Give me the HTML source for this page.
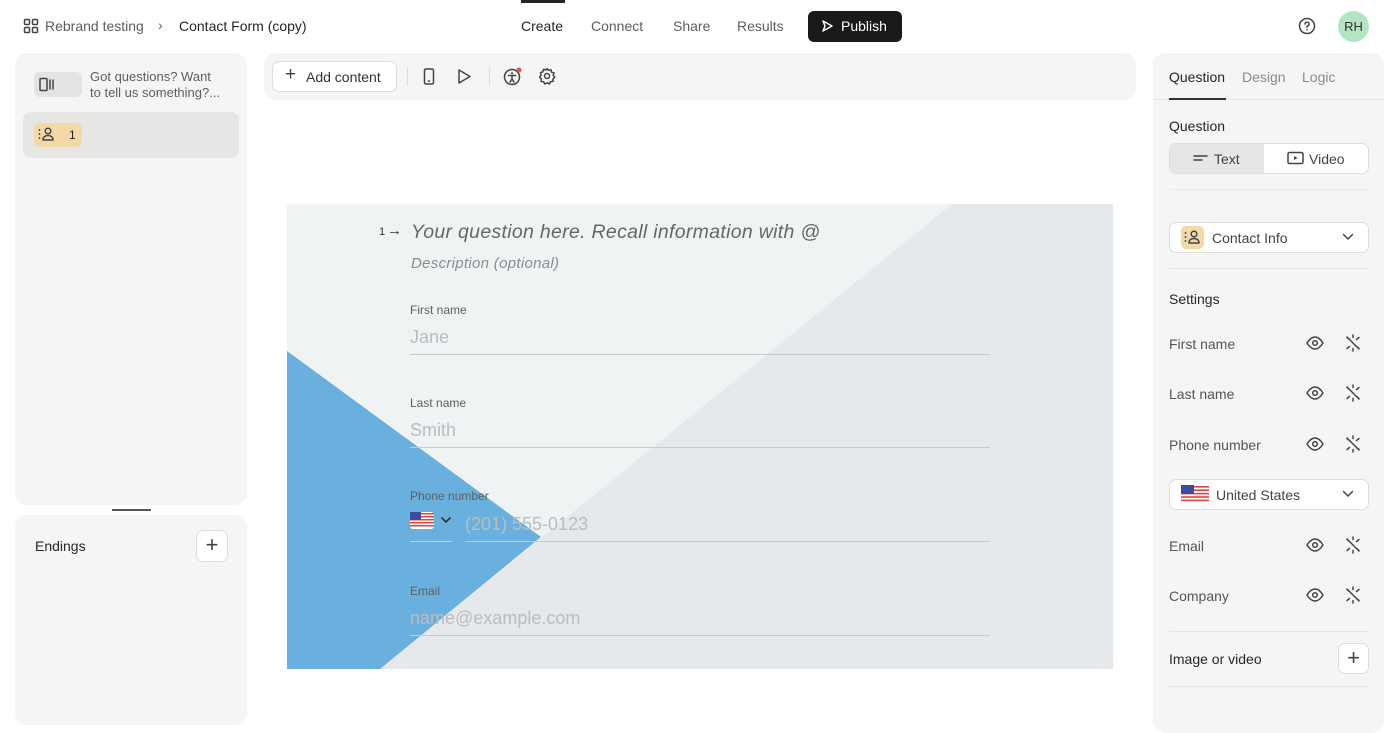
<!DOCTYPE html>
<html><head><meta charset="utf-8"><style>
*{box-sizing:border-box;margin:0;padding:0}
body{width:1400px;height:712px;overflow:hidden;background:#fff;font-family:"Liberation Sans",sans-serif;color:#262626;position:relative}
.a{position:absolute}
.panel{background:#f5f5f4;border-radius:12px}
.t{font-size:14px;white-space:nowrap}
.lbl{font-size:12px;color:#5e5e5e}
.ph{font-size:18px;color:#b9bdbf}
.line{height:1px;background:#c9cccd}
.ico{stroke:#444;fill:none;stroke-width:1.5;stroke-linecap:round;stroke-linejoin:round}
</style></head><body>

<svg class="a" style="left:23px;top:18px" width="16" height="16" viewBox="0 0 16 16"><g class="ico" stroke-width="1.3"><rect x="1.5" y="1.5" width="5" height="5" rx="1"/><rect x="9.5" y="1.5" width="5" height="5" rx="1"/><rect x="1.5" y="9.5" width="5" height="5" rx="1"/><rect x="9.5" y="9.5" width="5" height="5" rx="1"/></g></svg>
<div class="a t" style="left:45px;top:18px;color:#5e5e5e">Rebrand testing</div>
<div class="a t" style="left:158px;top:17px;color:#5e5e5e">›</div>
<div class="a t" style="left:179px;top:18px">Contact Form (copy)</div>
<div class="a" style="left:521px;top:0;width:44px;height:3px;background:#262626"></div>
<div class="a t" style="left:521px;top:18px">Create</div>
<div class="a t" style="left:591px;top:18px;color:#5e5e5e">Connect</div>
<div class="a t" style="left:673px;top:18px;color:#5e5e5e">Share</div>
<div class="a t" style="left:737px;top:18px;color:#5e5e5e">Results</div>
<div class="a" style="left:808px;top:11px;width:94px;height:31px;background:#191919;border-radius:6px"></div>
<svg class="a" style="left:820px;top:19px" width="14" height="14" viewBox="0 0 14 14"><path d="M3 2 L12 7 L3 12 L5 7 Z" fill="none" stroke="#fff" stroke-width="1.5" stroke-linejoin="round"/></svg>
<div class="a t" style="left:841px;top:18px;color:#fff">Publish</div>
<svg class="a" style="left:1298px;top:17px" width="18" height="18" viewBox="0 0 18 18"><circle cx="9" cy="9" r="7.5" class="ico"/><path d="M7 7a2 2 0 1 1 2.5 2c-.5.2-.5.6-.5 1.2" class="ico"/><circle cx="9" cy="12.8" r=".8" fill="#444"/></svg>
<div class="a" style="left:1338px;top:11px;width:31px;height:31px;border-radius:50%;background:#b3e5c3;font-size:13px;text-align:center;line-height:31px;color:#333">RH</div>

<div class="a panel" style="left:15px;top:53px;width:232px;height:452px"></div>
<div class="a" style="left:34px;top:72px;width:48px;height:25px;background:#e3e3e2;border-radius:6px"></div>
<svg class="a" style="left:39px;top:77px" width="18" height="15" viewBox="0 0 18 15"><rect x="1" y="1.5" width="7" height="12" rx="1" class="ico"/><path d="M11 3v9M14 3v9" class="ico"/></svg>
<div class="a" style="left:90px;top:69px;font-size:13px;line-height:16px;color:#5e5e5e">Got questions? Want<br>to tell us something?...</div>
<div class="a" style="left:23px;top:112px;width:216px;height:46px;background:#e6e6e5;border-radius:8px"></div>
<div class="a" style="left:34px;top:123px;width:48px;height:24px;background:#f3d9a8;border-radius:6px"></div>
<svg class="a" style="left:37px;top:126px" width="20" height="18" viewBox="0 0 20 18"><circle cx="2.5" cy="4" r=".9" fill="#333"/><circle cx="2.5" cy="8" r=".9" fill="#333"/><circle cx="2.5" cy="12" r=".9" fill="#333"/><circle cx="11" cy="5" r="2.8" class="ico" stroke="#333"/><path d="M6 14c0-3 2.2-4.5 5-4.5s5 1.5 5 4.5Z" class="ico" stroke="#333"/></svg>
<div class="a" style="left:69px;top:128px;font-size:12px">1</div>
<div class="a" style="left:112px;top:509px;width:39px;height:2px;background:#555"></div>
<div class="a panel" style="left:15px;top:515px;width:232px;height:210px"></div>
<div class="a t" style="left:35px;top:538px">Endings</div>
<div class="a" style="left:196px;top:530px;width:32px;height:32px;border:1px solid #ddd;border-radius:7px;background:#fff;text-align:center;line-height:28px;font-size:22px;color:#444;font-weight:300">+</div>

<div class="a panel" style="left:264px;top:53px;width:872px;height:47px"></div>
<div class="a" style="left:272px;top:61px;width:125px;height:31px;background:#fff;border:1px solid #ddd;border-radius:7px"></div>
<div class="a t" style="left:285px;top:68px;font-size:19px;line-height:14px;color:#444;font-weight:300">+</div>
<div class="a t" style="left:306px;top:69px;color:#333">Add content</div>
<div class="a" style="left:407px;top:67px;width:1px;height:19px;background:#ddd"></div>
<svg class="a" style="left:422px;top:68px" width="14" height="17" viewBox="0 0 14 17"><rect x="2.5" y="1" width="9" height="15" rx="1.5" class="ico"/><path d="M6.5 13h1" class="ico"/></svg>
<svg class="a" style="left:456px;top:68px" width="16" height="17" viewBox="0 0 16 17"><path d="M3 2 L14 8.5 L3 15 Z" class="ico"/></svg>
<div class="a" style="left:489px;top:67px;width:1px;height:19px;background:#ddd"></div>
<svg class="a" style="left:503px;top:67px" width="20" height="20" viewBox="0 0 20 20"><circle cx="9" cy="10" r="7.5" class="ico"/><circle cx="9" cy="6.3" r="1" fill="#444"/><path d="M5.5 8.5h7M9 8.5v3.5l-2 3M9 12l2 3" class="ico" stroke-width="1.3"/><circle cx="16" cy="3" r="2.5" fill="#e0584a"/></svg>
<svg class="a" style="left:538px;top:67px" width="18" height="18" viewBox="0 0 18 18"><circle cx="9" cy="9" r="2.5" class="ico"/><path d="M9 1.5l1.6 1.9 2.4-.6.6 2.4 2.4.8-.8 2.4 1.6 1.9-1.9 1.6.2 2.5-2.5.2-1.1 2.3-2.5-1-2.3 1.1-1.1-2.3-2.5-.2.2-2.5L1.6 10 3.2 8 2.5 5.6 4.9 4.8 5.5 2.4 8 3z" class="ico" stroke-width="1.3"/></svg>

<svg class="a" style="left:287px;top:204px" width="826" height="465" viewBox="0 0 826 465">
<rect width="826" height="465" fill="#f0f3f4"/>
<polygon points="665,0 826,0 826,465 93,465" fill="#e6e9eb"/>
<polygon points="0,147 254,333 93,465 0,465" fill="#6ab0de"/>
</svg>
<div class="a" style="left:379px;top:226px;font-size:11px;color:#333">1</div>
<div class="a" style="left:387px;top:222px;font-size:15px;color:#333">→</div>
<div class="a" style="left:411px;top:221px;font-size:19.5px;letter-spacing:0.3px;font-style:italic;color:#666">Your question here. Recall information with @</div>
<div class="a" style="left:411px;top:255px;font-size:15px;letter-spacing:0.3px;font-style:italic;color:#8a8d8f">Description (optional)</div>

<div class="a lbl" style="left:410px;top:303px">First name</div>
<div class="a ph" style="left:410px;top:327px">Jane</div>
<div class="a line" style="left:410px;top:354px;width:580px"></div>
<div class="a lbl" style="left:410px;top:396px">Last name</div>
<div class="a ph" style="left:410px;top:420px">Smith</div>
<div class="a line" style="left:410px;top:447px;width:580px"></div>
<div class="a lbl" style="left:410px;top:489px">Phone number</div>
<svg class="a" style="left:410px;top:512px" width="24" height="17" viewBox="0 0 24 17"><rect width="24" height="17" rx="3" fill="#fff"/><g fill="#d44"><rect y="1" width="24" height="1.5"/><rect y="4" width="24" height="1.5"/><rect y="7" width="24" height="1.5"/><rect y="10" width="24" height="1.5"/><rect y="13" width="24" height="1.5"/></g><rect width="11" height="8" fill="#3a4d9a"/></svg>
<svg class="a" style="left:440px;top:516px" width="12" height="8" viewBox="0 0 12 8"><path d="M1.5 1.5L6 6l4.5-4.5" stroke="#333" stroke-width="1.6" fill="none"/></svg>
<div class="a ph" style="left:465px;top:514px">(201) 555-0123</div>
<div class="a line" style="left:410px;top:541px;width:42px"></div>
<div class="a line" style="left:465px;top:541px;width:525px"></div>
<div class="a lbl" style="left:410px;top:584px">Email</div>
<div class="a ph" style="left:410px;top:608px">name@example.com</div>
<div class="a line" style="left:410px;top:635px;width:580px"></div>

<div class="a panel" style="left:1153px;top:53px;width:231px;height:680px"></div>
<div class="a t" style="left:1169px;top:69px">Question</div>
<div class="a t" style="left:1242px;top:69px;color:#8a8a8a">Design</div>
<div class="a t" style="left:1302px;top:69px;color:#8a8a8a">Logic</div>
<div class="a" style="left:1153px;top:99px;width:231px;height:1px;background:#e3e3e2"></div>
<div class="a" style="left:1169px;top:98px;width:57px;height:2px;background:#333"></div>
<div class="a t" style="left:1169px;top:118px">Question</div>
<div class="a" style="left:1169px;top:143px;width:200px;height:31px;border:1px solid #ddd;border-radius:7px;background:#fff;overflow:hidden"><div style="width:94px;height:100%;background:#e6e6e5"></div></div>
<svg class="a" style="left:1193px;top:153px" width="16" height="10" viewBox="0 0 16 10"><path d="M1 3h13M1 7h8" class="ico"/></svg>
<div class="a t" style="left:1214px;top:151px;color:#444">Text</div>
<svg class="a" style="left:1287px;top:151px" width="17" height="14" viewBox="0 0 17 14"><rect x="1" y="1.5" width="15" height="11" rx="1.5" class="ico"/><path d="M7 5v4l3.5-2z" fill="#444"/></svg>
<div class="a t" style="left:1309px;top:151px;color:#444">Video</div>
<div class="a" style="left:1169px;top:189px;width:200px;height:1px;background:#ebebea"></div>
<div class="a" style="left:1169px;top:222px;width:200px;height:31px;border:1px solid #ddd;border-radius:7px;background:#fff"></div>
<div class="a" style="left:1181px;top:226px;width:23px;height:23px;background:#f3d9a8;border-radius:5px"></div>
<svg class="a" style="left:1183px;top:229px" width="20" height="18" viewBox="0 0 20 18"><circle cx="2.5" cy="4" r=".9" fill="#333"/><circle cx="2.5" cy="8" r=".9" fill="#333"/><circle cx="2.5" cy="12" r=".9" fill="#333"/><circle cx="11" cy="5" r="2.8" class="ico" stroke="#333"/><path d="M6 14c0-3 2.2-4.5 5-4.5s5 1.5 5 4.5Z" class="ico" stroke="#333"/></svg>
<div class="a t" style="left:1212px;top:230px;color:#444">Contact Info</div>
<svg class="a" style="left:1342px;top:233px" width="12" height="8" viewBox="0 0 12 8"><path d="M1.5 1.5L6 6l4.5-4.5" class="ico"/></svg>
<div class="a" style="left:1169px;top:268px;width:200px;height:1px;background:#e3e3e2"></div>
<div class="a t" style="left:1169px;top:291px">Settings</div>

<div class="a t" style="left:1169px;top:336px;color:#555">First name</div>
<div class="a t" style="left:1169px;top:386px;color:#555">Last name</div>
<div class="a t" style="left:1169px;top:437px;color:#555">Phone number</div>
<div class="a t" style="left:1169px;top:538px;color:#555">Email</div>
<div class="a t" style="left:1169px;top:588px;color:#555">Company</div>
<svg class="a" style="left:1304px;top:333px" width="60" height="275" viewBox="0 0 60 275">
<defs><g id="r"><path d="M3 10c2.5-4 5.5-6 8-6s5.5 2 8 6c-2.5 4-5.5 6-8 6s-5.5-2-8-6z" class="ico"/><circle cx="11" cy="10" r="2.3" class="ico"/><path d="M49 2v2.5M49 15.5v2.5M43 4.5l2.5 2M55 4.5l-2.5 2M43 15.5l2.5-2M55 15.5l-2.5-2M43 4l12 12" class="ico" stroke-width="1.4"/></g></defs>
<use href="#r" y="0"/><use href="#r" y="50"/><use href="#r" y="101"/><use href="#r" y="202"/><use href="#r" y="252"/>
</svg>
<div class="a" style="left:1169px;top:479px;width:200px;height:31px;border:1px solid #ddd;border-radius:7px;background:#fff"></div>
<svg class="a" style="left:1181px;top:485px" width="28" height="19" viewBox="0 0 28 19"><rect width="28" height="19" rx="3" fill="#fff"/><g fill="#d44"><rect y="1" width="28" height="1.6"/><rect y="4.4" width="28" height="1.6"/><rect y="7.8" width="28" height="1.6"/><rect y="11.2" width="28" height="1.6"/><rect y="14.6" width="28" height="1.6"/></g><rect width="13" height="9" fill="#3a4d9a"/></svg>
<div class="a t" style="left:1216px;top:487px;color:#444">United States</div>
<svg class="a" style="left:1342px;top:490px" width="12" height="8" viewBox="0 0 12 8"><path d="M1.5 1.5L6 6l4.5-4.5" class="ico"/></svg>
<div class="a" style="left:1169px;top:631px;width:200px;height:1px;background:#e3e3e2"></div>
<div class="a t" style="left:1169px;top:651px">Image or video</div>
<div class="a" style="left:1338px;top:643px;width:31px;height:31px;border:1px solid #ddd;border-radius:7px;background:#fff;text-align:center;line-height:27px;font-size:22px;color:#444;font-weight:300">+</div>
<div class="a" style="left:1169px;top:686px;width:200px;height:1px;background:#e3e3e2"></div>
</body></html>
